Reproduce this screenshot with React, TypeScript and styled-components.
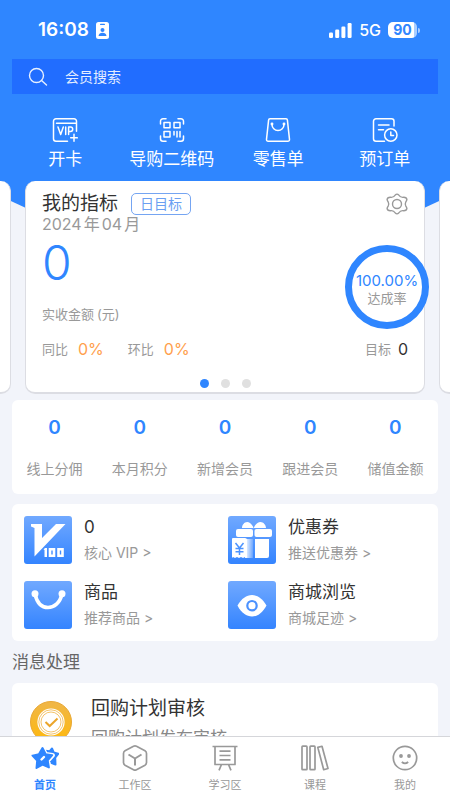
import React from "react";
import styled, { createGlobalStyle } from "styled-components";

const BLUE = "#2f86ff";

const GlobalStyle = createGlobalStyle`
  *, *::before, *::after { box-sizing: border-box; }
  body {
    margin: 0;
    background: #f2f4fa;
    color: #333;
    font-family: Inter, "Noto Sans CJK SC", sans-serif;
    font-size: 15px;
    line-height: 20px;
  }
  button {
    margin: 0;
    padding: 0;
    border: 0;
    background: none;
    color: inherit;
    font: inherit;
    text-align: inherit;
    cursor: pointer;
  }
  a { color: inherit; text-decoration: none; }
  h1, h2, h3, p, dl, dd { margin: 0; padding: 0; font-weight: 400; }
  svg { display: block; flex: none; }
`;

const Page = styled.div`
  display: flex;
  flex-direction: column;
  height: 100vh;
  overflow: hidden;
`;

const Content = styled.main`
  flex: 1;
  min-height: 0;
  overflow-y: auto;
  scrollbar-width: none;
`;

const Hero = styled.header`
  position: relative;
  isolation: isolate;
  padding-top: 20px;

  &::before {
    content: "";
    position: absolute;
    inset: 0;
    z-index: -1;
    background: ${BLUE};
    clip-path: polygon(0 0, 100% 0, 100% 196px, 50% 300px, 0 196px);
  }
`;

const StatusBar = styled.div`
  display: flex;
  align-items: center;
  justify-content: space-between;
  height: 20px;
  padding: 0 30px 0 38px;
  color: #fff;
`;

const StatusGroup = styled.div`
  display: flex;
  align-items: center;
  gap: 7px;
`;

const Clock = styled.span`
  font-size: 19px;
  font-weight: 600;
`;

const Network = styled.span`
  font-size: 16px;
  font-weight: 500;
`;

const Battery = styled.span`
  display: flex;
  align-items: center;
  gap: 1px;

  &::after {
    content: "";
    width: 2px;
    height: 5px;
    border-radius: 0 2px 2px 0;
    background: #a9ceff;
  }
`;

const BatteryLevel = styled.span`
  width: 29px;
  height: 16px;
  border-radius: 5px;
  background: linear-gradient(90deg, #fff 90%, #a9ceff 90%);
  color: ${BLUE};
  font-size: 14px;
  font-weight: 700;
  line-height: 16px;
  text-align: center;
`;

const SearchBar = styled.label`
  display: flex;
  align-items: center;
  gap: 17px;
  height: 35px;
  margin: 19px 12px 0;
  padding: 0 16px;
  background: #216dff;
  color: #fff;
`;

const SearchInput = styled.input`
  flex: 1;
  min-width: 0;
  padding: 0;
  border: 0;
  outline: 0;
  background: none;
  color: #fff;
  font: inherit;
  font-size: 14px;

  &::placeholder { color: #e4eeff; opacity: 1; }
`;

const Actions = styled.nav`
  display: grid;
  grid-template-columns: repeat(4, 1fr);
  padding: 23px 12px 12px;
`;

const Action = styled.button`
  display: flex;
  flex-direction: column;
  align-items: center;
  gap: 6px;
  color: #fff;
  font-size: 17px;
`;

const Carousel = styled.section`
  display: flex;
  justify-content: center;
  gap: 14px;
  overflow: hidden;
`;

const Slide = styled.article`
  flex: none;
  width: calc(100% - 50px);
  padding: 12px 16px 4px;
  border: solid #dcdde3;
  border-width: 0 1px 2px;
  border-radius: 10px;
  background: #fff;
`;

const Row = styled.div`
  display: flex;
  align-items: center;
  justify-content: space-between;
`;

const TitleGroup = styled.div`
  display: flex;
  align-items: center;
  gap: 13px;
`;

const SlideTitle = styled.h1`
  font-size: 19px;
  line-height: 22px;
`;

const Tag = styled.button`
  height: 22px;
  padding: 0 8px;
  border: 1px solid #75a5f2;
  border-radius: 5px;
  color: #6b9ff2;
  font-size: 14px;
  line-height: 20px;
`;

const Period = styled.p`
  display: flex;
  gap: 2px;
  color: #999;
  font-size: 16px;
  line-height: 18px;
`;

const Summary = styled.div`
  display: flex;
  align-items: flex-start;
  justify-content: space-between;
  margin-right: -21px;
  padding-top: 12px;
`;

const Amount = styled.p`
  color: ${BLUE};
  font-size: 48px;
  font-weight: 300;
  line-height: 36px;
`;

const Muted = styled.span`
  color: #999;
  font-size: 13px;
`;

const AmountLabel = styled(Muted)`
  display: flex;
  gap: 3px;
  margin-top: 23px;
`;

const Ring = styled.div`
  display: flex;
  flex-direction: column;
  align-items: center;
  justify-content: center;
  width: 84px;
  height: 84px;
  padding-top: 4px;
  border: 7px solid ${BLUE};
  border-radius: 50%;
  color: ${BLUE};
  font-size: 15px;
  line-height: 18px;
  white-space: nowrap;
`;

const RingLabel = styled(Muted)`
  line-height: 17px;
`;

const Metrics = styled(Row)`
  padding-top: 10px;
`;

const MetricGroup = styled.div`
  display: flex;
  gap: 24px;
`;

const Metric = styled.p<{ $color: string; $gap: number }>`
  display: flex;
  align-items: center;
  gap: ${(p) => p.$gap}px;
  color: ${(p) => p.$color};
  font-size: 16px;
`;

const Dots = styled.div`
  display: flex;
  justify-content: center;
  gap: 12px;
  padding-top: 20px;
`;

const Dot = styled.button<{ $active?: boolean }>`
  width: 9px;
  height: 9px;
  border-radius: 50%;
  background: ${(p) => (p.$active ? BLUE : "#e0e0e0")};
`;

const Panel = styled.section`
  margin: 0 12px;
  border-radius: 6px;
  background: #fff;
`;

const Stats = styled(Panel)`
  display: grid;
  grid-template-columns: repeat(5, 1fr);
  margin-top: 6px;
  padding: 18px 0 15px;
`;

const Stat = styled.dl`
  display: flex;
  flex-direction: column-reverse;
  align-items: center;
  gap: 21px;
`;

const StatLabel = styled.dt`
  color: #999;
  font-size: 14px;
  white-space: nowrap;
`;

const StatValue = styled.dd`
  color: ${BLUE};
  font-size: 19px;
  font-weight: 600;
`;

const Shortcuts = styled(Panel)`
  display: grid;
  grid-template-columns: 1fr 1fr;
  gap: 17px 6px;
  margin-top: 10px;
  padding: 12px;
`;

const Shortcut = styled.button`
  display: flex;
  align-items: center;
  gap: 12px;
`;

const ShortcutText = styled.span`
  display: flex;
  flex-direction: column;
  gap: 6px;
`;

const ShortcutTitle = styled.span`
  font-size: 17px;
`;

const ShortcutHint = styled.span`
  color: #999;
  font-size: 14px;
`;

const SectionTitle = styled.h2`
  margin: 11px 12px;
  color: #666;
  font-size: 17px;
`;

const Message = styled(Panel)`
  display: flex;
  gap: 19px;
  padding: 14px 18px;
`;

const MessageIcon = styled.div`
  padding-top: 4px;
`;

const MessageTitle = styled.h3`
  padding-bottom: 7px;
  font-size: 19px;
  line-height: 24px;
`;

const MessageText = styled.p`
  color: #888;
  font-size: 17px;
`;

const TabBar = styled.nav`
  flex: none;
  display: grid;
  grid-template-columns: repeat(5, 1fr);
  height: 64px;
  padding-top: 7px;
  border-top: 1px solid #d5d6da;
  background: #fff;
`;

const Tab = styled.a<{ $active?: boolean }>`
  display: flex;
  flex-direction: column;
  align-items: center;
  gap: 5px;
  color: ${(p) => (p.$active ? BLUE : "#999")};
  font-size: 11px;
  font-weight: ${(p) => (p.$active ? 700 : 400)};
  line-height: 16px;
`;

const ContactBadgeIcon = () => (
  <svg width="13" height="17" viewBox="0 0 13 17" aria-hidden="true">
    <rect width="13" height="17" rx="2.5" fill="#fff" />
    <rect x="4" y="1.7" width="5" height="1.4" rx=".7" fill={BLUE} />
    <circle cx="6.5" cy="8" r="2" fill={BLUE} />
    <path d="M2.5 14c.3-2.3 1.8-3.3 4-3.3s3.7 1 4 3.3z" fill={BLUE} />
  </svg>
);

const SignalIcon = () => (
  <svg width="23" height="15" viewBox="0 0 23 15" fill="#fff" aria-hidden="true">
    <rect x="0" y="9.5" width="4" height="5.5" rx="1.2" />
    <rect x="6.2" y="6.5" width="4" height="8.5" rx="1.2" />
    <rect x="12.4" y="3.5" width="4" height="11.5" rx="1.2" />
    <rect x="18.6" y="0" width="4" height="15" rx="1.2" />
  </svg>
);

const SearchIcon = () => (
  <svg width="20" height="20" viewBox="0 0 20 20" fill="none" stroke="#e8f0ff" strokeWidth="1.4" strokeLinecap="round" aria-hidden="true">
    <circle cx="8.5" cy="8.5" r="7" />
    <path d="M13.600 13.600 18.500 18" />
  </svg>
);

const ActionSvg = ({ children }: { children: React.ReactNode }) => (
  <svg width="26" height="26" viewBox="0 0 26 26" fill="none" stroke="#fff" strokeWidth="1.5" strokeLinecap="round" strokeLinejoin="round" aria-hidden="true">
    {children}
  </svg>
);

const VipCardIcon = () => (
  <ActionSvg>
    <path d="M15.5 24.2H4a2.500 2.500 0 0 1-2.500-2.500V4.300A2.500 2.500 0 0 1 4 1.800h18a2.500 2.500 0 0 1 2.500 2.500v10" />
    <path d="M4.500 6.200H24" />
    <path d="m6 10 2.700 7.500L11.300 10M13.700 10v7.500M16.600 17.500V10h1.900a2.200 2.200 0 0 1 0 4.400h-1.900M22 17.300v7M18.700 20.800h6.600" />
  </ActionSvg>
);

const QrIcon = () => (
  <ActionSvg>
    <path d="M1.500 7V4.300a2.500 2.500 0 0 1 2.500-2.500h3M19 1.800h3a2.500 2.500 0 0 1 2.500 2.500V7M24.500 19v2.700a2.500 2.500 0 0 1-2.500 2.500h-3M7 24.200H4a2.500 2.500 0 0 1-2.500-2.500V19" />
    <path d="M5 5.500h6v5.300H5zM15 5.500h6v5.300h-6zM5 14.500h6V20H5z" />
    <path d="M15 14.500V18M18 14.500V20M21 14.500V20" />
  </ActionSvg>
);

const BagIcon = () => (
  <ActionSvg>
    <path d="M5 1.800h16a1.400 1.400 0 0 1 1.400 1.300l2.100 19.200a1.700 1.700 0 0 1-1.700 1.900H3.200a1.700 1.700 0 0 1-1.700-1.900L3.600 3.100A1.400 1.400 0 0 1 5 1.800z" />
    <path d="M7 7.500a6 6 0 0 0 12 0" />
    <circle cx="7" cy="7" r=".7" fill="#fff" />
    <circle cx="19" cy="7" r=".7" fill="#fff" />
  </ActionSvg>
);

const PreorderIcon = () => (
  <ActionSvg>
    <path d="M22 9V4.300a2.500 2.500 0 0 0-2.500-2.500H4a2.500 2.500 0 0 0-2.500 2.500v17.400A2.500 2.500 0 0 0 4 24.200h8.500" />
    <path d="M6.500 7.900H17M6.500 12.800h5" />
    <circle cx="18.800" cy="18" r="6.200" />
    <path d="M18.800 15v3.600h2.700" />
  </ActionSvg>
);

const GearIcon = () => (
  <svg width="22" height="22" viewBox="0 0 22 22" fill="none" stroke="#999" strokeWidth="1.400" strokeLinejoin="round" aria-hidden="true">
    <path d="M9.300 2Q11 .2 12.700 2 14.500 4.900 17.700 4.300 20.700 4.300 20.900 6.600 20.700 7.700 19.700 9.200 18.800 11 19.700 12.800 20.700 14.300 20.900 15.400 20.700 17.700 17.700 17.700 14.500 17.100 12.700 20 11 21.800 9.300 20 7.500 17.100 4.300 17.700 1.300 17.700 1.100 15.400 1.300 14.300 2.300 12.800 3.200 11 2.300 9.200 1.300 7.700 1.100 6.600 1.300 4.300 4.300 4.300 7.500 4.900 9.300 2Z" />
    <circle cx="11" cy="11" r="4.500" />
  </svg>
);

const Tile = ({ id, children }: { id: string; children: React.ReactNode }) => (
  <svg width="48" height="48" viewBox="0 0 48 48" aria-hidden="true">
    <defs>
      <linearGradient id={id} x1="0" y1="0" x2="0" y2="1">
        <stop offset="0" stopColor="#71a9ff" />
        <stop offset="1" stopColor="#3484ff" />
      </linearGradient>
    </defs>
    <rect width="48" height="48" rx="3" fill={`url(#${id})`} />
    {children}
  </svg>
);

const CoreVipIcon = () => (
  <Tile id="tile-vip">
    <path d="M7 8h11v14L32 8h9.500L10.500 40.500V12L7 10.500z" fill="#fff" />
    <path d="M19.500 33.500 21 32h2v9h-2.500v-7z" fill="#fff" />
    <path d="M26 33.300h4v6.400h-4zM34.500 33.300h4v6.400h-4z" fill="none" stroke="#fff" strokeWidth="2.600" />
  </Tile>
);

const GoodsIcon = () => (
  <Tile id="tile-goods">
    <path d="M11 13c2 9 7 13.500 13 13.500S36 22 38 13" fill="none" stroke="#fff" strokeWidth="3.500" />
    <circle cx="11" cy="12.700" r="3.500" fill="#fff" />
    <circle cx="38" cy="12.700" r="3.500" fill="#fff" />
  </Tile>
);

const CouponIcon = () => (
  <Tile id="tile-coupon">
    <defs>
      <linearGradient id="coupon-shade" x1="0" x2="1">
        <stop offset="0" stopColor="#fff" />
        <stop offset="1" stopColor="#fff" stopOpacity=".2" />
      </linearGradient>
    </defs>
    <path d="M14 12c0-4 4-8 8-5 2 1.500 3 3 3.700 5.500C26.500 10 27.500 8.500 29.500 7c4-3 8.500 1 8.500 5z" fill="#fff" />
    <rect x="8" y="13" width="17" height="8" rx="2" fill="#fff" />
    <rect x="26.500" y="13" width="17.500" height="8" rx="2" fill="#fff" />
    <path d="M27 23h14v17a2 2 0 0 1-2 2H27z" fill="#fff" />
    <path d="M17 23h8v19h-8z" fill="url(#coupon-shade)" />
    <path d="M5 22h12q2 0 2 2v18l-2-1-2 1-2-1-2 1-2-1-2 1-2-1-1 1V23q0-1 1-1z" fill="#fff" />
    <path d="m7.500 27 4 5 4-5M11.500 32v7M7.500 32.500h8M7.500 35.800h8" fill="none" stroke="#4c93ff" strokeWidth="1.500" />
  </Tile>
);

const EyeIcon = () => (
  <Tile id="tile-eye">
    <path d="M9.500 24.500C13.500 17.500 18.500 14 24 14s10.500 3.500 14.500 10.500C34.500 32 29.500 35.500 24 35.500S13.500 32 9.500 24.500z" fill="#fff" />
    <circle cx="24" cy="24.700" r="4.700" fill="none" stroke="#4a91ff" strokeWidth="2.200" />
  </Tile>
);

const ApprovalIcon = () => (
  <svg width="42" height="42" viewBox="0 0 42 42" fill="none" aria-hidden="true">
    <defs>
      <linearGradient id="approval" x1="0" y1="0" x2="0" y2="1">
        <stop offset="0" stopColor="#efb649" />
        <stop offset="1" stopColor="#ffb90c" />
      </linearGradient>
    </defs>
    <circle cx="21" cy="21" r="20.500" fill="url(#approval)" stroke="#e8a733" />
    <circle cx="21" cy="21" r="13.600" fill="#fff" />
    <circle cx="21" cy="21" r="12.200" stroke="#f0b445" strokeWidth=".8" />
    <circle cx="21" cy="21" r="10" stroke="#f0b445" strokeWidth=".8" />
    <path d="m15.500 21 4.200 4 7.800-7.500" stroke="#eba52a" strokeWidth="2" />
  </svg>
);

const TabSvg = ({ children }: { children: React.ReactNode }) => (
  <svg width="28" height="28" viewBox="0 0 28 28" fill="none" stroke="currentColor" strokeWidth="1.700" strokeLinejoin="round" aria-hidden="true">
    {children}
  </svg>
);

const HomeIcon = () => (
  <TabSvg>
    <path d="m21 4.500 1.700 4 4.500 1.300-3 3.700.3 7-4.500-1.700-6-8 .5-4 4 .5z" fill="currentColor" strokeWidth="2" />
    <path d="m11.500 4 3.200 6.300 7 .9-4.700 5.200 1 7-6.500-2.800L5.500 24l.7-7.400-5-5 6.800-1.500z" fill="#fff" stroke="#fff" strokeWidth="4.500" />
    <path d="m11.500 4 3.200 6.300 6.500.9-4.500 5.200 1.200 7-6.400-2.800L5.500 24l.7-7.400-4.700-5 6.500-1.500z" fill="currentColor" strokeWidth="2" />
    <path d="m10.500 15.500 2.500-2.500" stroke="#fff" strokeWidth="2.400" strokeLinecap="round" />
  </TabSvg>
);

const WorkIcon = () => (
  <TabSvg>
    <path d="M12.500 2.300q1.500-.8 3 0l8.500 4.500q1.500.9 1.500 2.600v9.200q0 1.700-1.500 2.600l-8.500 4.500q-1.500.8-3 0L4 21.200q-1.500-.9-1.500-2.600V9.400Q2.500 7.700 4 6.800z" />
    <path d="m7.500 10.500 6.500 4 6.500-4M14 14.500v7" strokeWidth="2" />
  </TabSvg>
);

const StudyIcon = () => (
  <TabSvg>
    <path d="M1.500 2.500h25M4 2.500v18h20v-18M8.500 7.200h11M8.500 11.500h11M8.500 15.800h11M10.500 20.500 8 26.300M17.500 20.500l2.500 5.800" />
  </TabSvg>
);

const CourseIcon = () => (
  <TabSvg>
    <rect x="1" y="2.200" width="5" height="23.500" rx=".7" />
    <rect x="9" y="2.200" width="5" height="23.500" rx=".7" />
    <path d="m16.800 3.400 4.200-1.100 6 22.200-4.300 1.200z" />
  </TabSvg>
);

const ProfileIcon = () => (
  <TabSvg>
    <circle cx="14" cy="14" r="11.700" />
    <circle cx="10" cy="12" r="1.900" fill="currentColor" stroke="none" />
    <circle cx="18" cy="12" r="1.900" fill="currentColor" stroke="none" />
    <path d="M10.800 18q3.200 2.800 6.400 0" />
  </TabSvg>
);

const actions = [
  { label: "开卡", Icon: VipCardIcon },
  { label: "导购二维码", Icon: QrIcon },
  { label: "零售单", Icon: BagIcon },
  { label: "预订单", Icon: PreorderIcon },
];

const stats = ["线上分佣", "本月积分", "新增会员", "跟进会员", "储值金额"];

const shortcuts = [
  { title: "0", hint: "核心 VIP >", Icon: CoreVipIcon },
  { title: "优惠券", hint: "推送优惠券 >", Icon: CouponIcon },
  { title: "商品", hint: "推荐商品 >", Icon: GoodsIcon },
  { title: "商城浏览", hint: "商城足迹 >", Icon: EyeIcon },
];

const tabs = [
  { label: "首页", Icon: HomeIcon },
  { label: "工作区", Icon: WorkIcon },
  { label: "学习区", Icon: StudyIcon },
  { label: "课程", Icon: CourseIcon },
  { label: "我的", Icon: ProfileIcon },
];

export default function App() {
  return (
    <Page>
      <GlobalStyle />
      <Content>
        <Hero>
          <StatusBar>
            <StatusGroup>
              <Clock>16:08</Clock>
              <ContactBadgeIcon />
            </StatusGroup>
            <StatusGroup>
              <SignalIcon />
              <Network>5G</Network>
              <Battery>
                <BatteryLevel>90</BatteryLevel>
              </Battery>
            </StatusGroup>
          </StatusBar>

          <SearchBar>
            <SearchIcon />
            <SearchInput type="search" placeholder="会员搜索" aria-label="会员搜索" />
          </SearchBar>

          <Actions>
            {actions.map(({ label, Icon }) => (
              <Action key={label} type="button">
                <Icon />
                {label}
              </Action>
            ))}
          </Actions>

          <Carousel>
            <Slide aria-hidden="true" />
            <Slide>
              <Row>
                <TitleGroup>
                  <SlideTitle>我的指标</SlideTitle>
                  <Tag type="button">日目标</Tag>
                </TitleGroup>
                <button type="button" aria-label="设置">
                  <GearIcon />
                </button>
              </Row>
              <Period>
                <span>2024</span>
                <span>年</span>
                <span>04</span>
                <span>月</span>
              </Period>
              <Summary>
                <div>
                  <Amount>0</Amount>
                  <AmountLabel>
                    <span>实收金额</span>
                    <span>(元)</span>
                  </AmountLabel>
                </div>
                <Ring>
                  100.00%
                  <RingLabel>达成率</RingLabel>
                </Ring>
              </Summary>
              <Metrics>
                <MetricGroup>
                  <Metric $color="#ff9f4d" $gap={10}>
                    <Muted>同比</Muted>0%
                  </Metric>
                  <Metric $color="#ff9f4d" $gap={10}>
                    <Muted>环比</Muted>0%
                  </Metric>
                </MetricGroup>
                <Metric $color="#333" $gap={7}>
                  <Muted>目标</Muted>0
                </Metric>
              </Metrics>
              <Dots>
                <Dot type="button" aria-label="1" $active />
                <Dot type="button" aria-label="2" />
                <Dot type="button" aria-label="3" />
              </Dots>
            </Slide>
            <Slide aria-hidden="true" />
          </Carousel>
        </Hero>

        <Stats>
          {stats.map((label) => (
            <Stat key={label}>
              <StatLabel>{label}</StatLabel>
              <StatValue>0</StatValue>
            </Stat>
          ))}
        </Stats>

        <Shortcuts>
          {shortcuts.map(({ title, hint, Icon }) => (
            <Shortcut key={hint} type="button">
              <Icon />
              <ShortcutText>
                <ShortcutTitle>{title}</ShortcutTitle>
                <ShortcutHint>{hint}</ShortcutHint>
              </ShortcutText>
            </Shortcut>
          ))}
        </Shortcuts>

        <SectionTitle>消息处理</SectionTitle>
        <Message>
          <MessageIcon>
            <ApprovalIcon />
          </MessageIcon>
          <div>
            <MessageTitle>回购计划审核</MessageTitle>
            <MessageText>回购计划发布审核</MessageText>
          </div>
        </Message>
      </Content>

      <TabBar>
        {tabs.map(({ label, Icon }, i) => (
          <Tab key={label} href="#" $active={i === 0} aria-current={i === 0 ? "page" : undefined}>
            <Icon />
            {label}
          </Tab>
        ))}
      </TabBar>
    </Page>
  );
}
